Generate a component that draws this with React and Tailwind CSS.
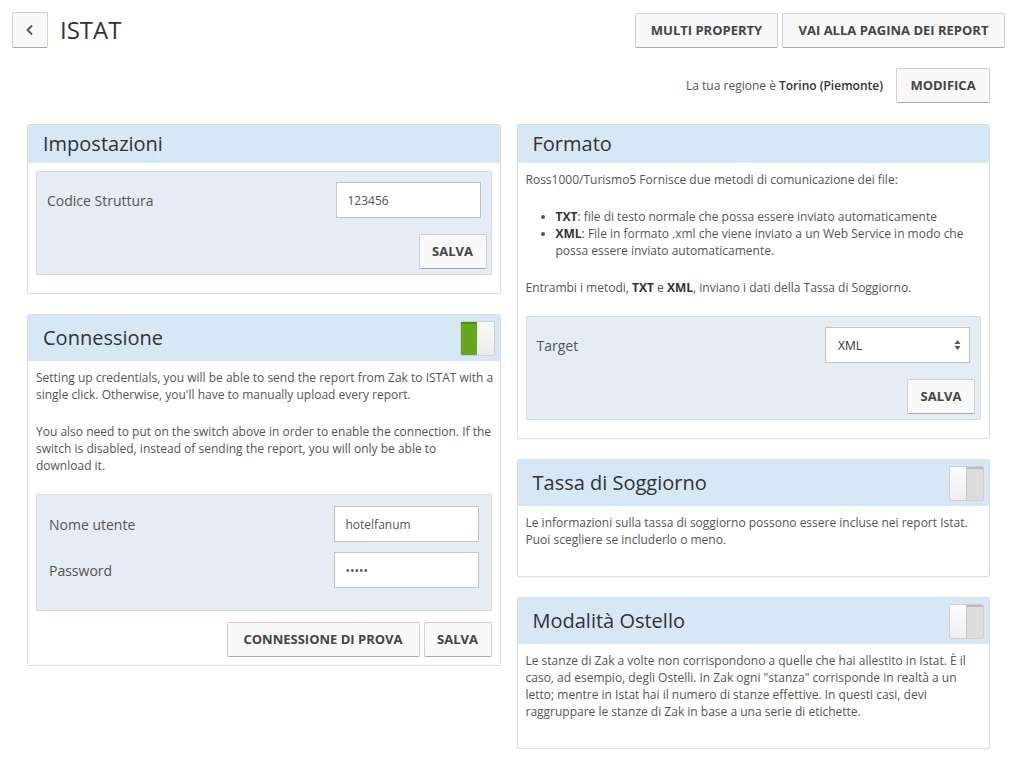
import React from 'react';

const btn =
  'h-[35px] px-3 bg-[#f8f8f8] border border-[#cfcfcf] border-b-[#a9a9a9] rounded-[2px] text-[13px] font-bold text-[#444] uppercase leading-none';

function Button({ children, className = '' }) {
  return <button className={`${btn} ${className}`}>{children}</button>;
}

function Switch({ on }) {
  if (on) {
    return (
      <div className="flex w-[35px] h-[35px] rounded-[2px] border border-[#cfcfcf] overflow-hidden">
        <div className="w-1/2 bg-[#66a623] border-t-2 border-[#4f8b17]" />
        <div className="w-1/2 bg-gradient-to-b from-[#f9f9f9] to-[#ececec]" />
      </div>
    );
  }
  return (
    <div className="flex w-[35px] h-[35px] rounded-[2px] border border-[#cfcfcf] overflow-hidden">
      <div className="w-1/2 bg-gradient-to-b from-[#fdfdfd] to-[#eeeeee] border-r border-[#c9c9c9]" />
      <div className="w-1/2 bg-[#dcdcdc] border-t-2 border-[#bdbdbd]" />
    </div>
  );
}

function Panel({ title, toggle, children, className = '' }) {
  return (
    <div className={`bg-white border border-[#dddddd] rounded-[2px] ${className}`}>
      <div
        className={`flex items-center justify-between bg-[#d6e8f6] pl-[15px] pr-[5px] ${
          toggle === undefined ? 'h-[38px]' : 'h-[46px]'
        }`}
      >
        <h2 className="text-[20px] text-[#333] leading-none">{title}</h2>
        {toggle !== undefined && <Switch on={toggle} />}
      </div>
      <div className="p-2">{children}</div>
    </div>
  );
}

function Field({ label, value, type = 'text', padX = 'px-[10px]' }) {
  return (
    <div className={`flex items-center justify-between ${padX}`}>
      <span className="text-[14px] text-[#555]">{label}</span>
      <input
        type={type}
        defaultValue={value}
        className="w-[145px] h-[36px] bg-white border border-[#c4c4c4] px-[11px] text-[12px] text-[#555] outline-none"
      />
    </div>
  );
}

function GrayBox({ children, className = '' }) {
  return <div className={`bg-[#e5ecf4] border border-[#d6dce3] ${className}`}>{children}</div>;
}

export default function App() {
  return (
    <div
      className="min-h-screen bg-white text-[#555] text-[12px] leading-[17px]"
      style={{ fontFamily: '"Open Sans", "Liberation Sans", sans-serif' }}
    >
      {/* header */}
      <div className="flex items-center justify-between pt-3 pl-3 pr-[9px]">
        <div className="flex items-center gap-3">
          <button className="w-[36px] h-[36px] flex items-center justify-center bg-[#f8f8f8] border border-[#cfcfcf] border-b-[#a9a9a9] rounded-[2px]">
            <svg width="10" height="12" viewBox="0 0 10 12" fill="none">
              <path d="M7 1.5L2.5 6L7 10.5" stroke="#555" strokeWidth="1.8" />
            </svg>
          </button>
          <h1 className="text-[24px] text-[#333] leading-none">ISTAT</h1>
        </div>
        <div className="flex gap-1">
          <Button className="w-[143px]">Multi Property</Button>
          <Button className="w-[223px]">Vai alla pagina dei report</Button>
        </div>
      </div>

      <div className="flex items-center justify-end gap-[13px] mt-[20px] pr-[24px]">
        <span>
          La tua regione è <span className="font-semibold text-[#333]">Torino (Piemonte)</span>
        </span>
        <Button className="w-[94px]">Modifica</Button>
      </div>

      <div className="grid grid-cols-2 gap-4 ml-[27px] mr-[24px] mt-[21px] items-start">
        <div className="flex flex-col gap-5">
          <Panel title="Impostazioni">
            <GrayBox className="mb-[10px]">
              <div className="pt-[10px]">
                <Field label="Codice Struttura" value="123456" />
              </div>
              <div className="flex justify-end mt-4 pr-[4px] pb-[5px]">
                <Button className="w-[68px]">Salva</Button>
              </div>
            </GrayBox>
          </Panel>

          <Panel title="Connessione" toggle={true}>
            <p className="mb-5 -mr-[4px]">
              Setting up credentials, you will be able to send the report from Zak to ISTAT with a
              single click. Otherwise, you'll have to manually upload every report.
            </p>
            <p className="mb-5 -mr-[2px]">
              You also need to put on the switch above in order to enable the connection. If the
              switch is disabled, instead of sending the report, you will only be able to download
              it.
            </p>
            <GrayBox className="pt-[11px] pb-[22px] flex flex-col gap-[10px]">
              <Field label="Nome utente" value="hotelfanum" padX="pl-[12px] pr-[12px]" />
              <Field label="Password" value="hotel" type="password" padX="pl-[12px] pr-[12px]" />
            </GrayBox>
            <div className="flex justify-end gap-1 mt-[11px]">
              <Button className="w-[193px]">Connessione di prova</Button>
              <Button className="w-[68px]">Salva</Button>
            </div>
          </Panel>
        </div>

        <div className="flex flex-col gap-5">
          <Panel title="Formato">
            <p className="mb-5">Ross1000/Turismo5 Fornisce due metodi di comunicazione dei file:</p>
            <ul className="list-disc pl-[30px] mb-5 marker:text-[#555]">
              <li>
                <b className="text-[#333]">TXT</b>: file di testo normale che possa essere inviato
                automaticamente
              </li>
              <li>
                <b className="text-[#333]">XML</b>: File in formato .xml che viene inviato a un Web
                Service in modo che possa essere inviato automaticamente.
              </li>
            </ul>
            <p className="mb-5">
              Entrambi i metodi, <b className="text-[#333]">TXT</b> e{' '}
              <b className="text-[#333]">XML</b>, inviano i dati della Tassa di Soggiorno.
            </p>
            <GrayBox className="mb-[10px]">
              <div className="flex items-center justify-between px-[10px] pt-[10px]">
                <span className="text-[14px] text-[#555]">Target</span>
                <div className="w-[145px] h-[36px] bg-white border border-[#c4c4c4] flex items-center justify-between pl-[12px] pr-[8px]">
                  <span className="text-[12px] text-[#333]">XML</span>
                  <svg width="7" height="12" viewBox="0 0 7 12">
                    <path d="M3.5 1L6.5 5H0.5Z" fill="#555" />
                    <path d="M3.5 11L6.5 7H0.5Z" fill="#555" />
                  </svg>
                </div>
              </div>
              <div className="flex justify-end mt-4 pr-[5px] pb-[5px]">
                <Button className="w-[68px]">Salva</Button>
              </div>
            </GrayBox>
          </Panel>

          <Panel title="Tassa di Soggiorno" toggle={false}>
            <p className="mb-5">
              Le informazioni sulla tassa di soggiorno possono essere incluse nei report Istat.
              Puoi scegliere se includerlo o meno.
            </p>
          </Panel>

          <Panel title="Modalità Ostello" toggle={false}>
            <p className="mb-5">
              Le stanze di Zak a volte non corrispondono a quelle che hai allestito in Istat. È il
              caso, ad esempio, degli Ostelli. In Zak ogni "stanza" corrisponde in realtà a un
              letto; mentre in Istat hai il numero di stanze effettive. In questi casi, devi
              raggruppare le stanze di Zak in base a una serie di etichette.
            </p>
          </Panel>
        </div>
      </div>
    </div>
  );
}
